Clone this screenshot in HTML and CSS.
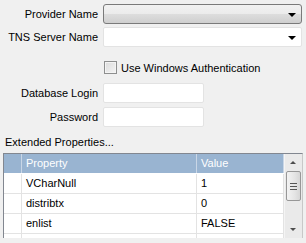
FILE: index.html
```html
<!DOCTYPE html>
<html lang="en">
<head>
    <meta charset="UTF-8">
    <title>Connection Properties</title>
    <link rel="stylesheet" href="styles.css">
</head>
<body>
    <div class="form">
        <div class="row">
            <span class="lbl">Provider Name</span>
            <div class="combo combo-ro"><span class="arrow"></span></div>
        </div>
        <div class="row row-tns">
            <span class="lbl">TNS Server Name</span>
            <div class="combo"><span class="arrow"></span></div>
        </div>
        <div class="check-row">
            <span class="checkbox"></span>
            <span class="check-text">Use Windows Authentication</span>
        </div>
        <div class="row row-login">
            <span class="lbl">Database Login</span>
            <div class="textbox"></div>
        </div>
        <div class="row row-pass">
            <span class="lbl">Password</span>
            <div class="textbox"></div>
        </div>
    </div>

    <div class="ext-title">Extended Properties...</div>

    <div class="grid">
        <div class="cells">
            <div class="cell head rowhead"></div>
            <div class="cell head">Property</div>
            <div class="cell head">Value</div>

            <div class="cell rowhead"></div>
            <div class="cell">VCharNull</div>
            <div class="cell">1</div>

            <div class="cell rowhead"></div>
            <div class="cell">distribtx</div>
            <div class="cell">0</div>

            <div class="cell rowhead"></div>
            <div class="cell">enlist</div>
            <div class="cell">FALSE</div>

            <div class="cell rowhead"></div>
            <div class="cell">Workaround Oracle Bug 914652</div>
            <div class="cell">TRUE</div>
        </div>
        <div class="vscroll">
            <span class="sb-up"></span>
            <div class="sb-thumb"><span></span><span></span><span></span></div>
            <span class="sb-down"></span>
        </div>
    </div>
</body>
</html>
```

FILE: styles.css
```css
body {
    margin: 0;
    padding: 0;
    background-color: #f0f0f0;
    color: #000;
    font-family: "Liberation Sans", Arial, sans-serif;
    font-size: 11px;
    width: 306px;
    height: 243px;
    overflow: hidden;
}
.form {
    padding-top: 4px;
}
.row {
    display: flex;
    align-items: center;
    height: 20px;
}
.row-tns {
    margin-top: 3px;
}
.row-login {
    margin-top: 9px;
}
.row-pass {
    margin-top: 4px;
}
.lbl {
    width: 98px;
    text-align: right;
    margin-right: 5px;
    white-space: nowrap;
}
.combo {
    position: relative;
    width: 199px;
    height: 20px;
    box-sizing: border-box;
    background-color: #fff;
    border: 1px solid #e3e3e3;
    border-radius: 2px;
}
.combo-ro {
    border: 1px solid #7a7a7a;
    border-radius: 3px;
    background: linear-gradient(#f2f2f2 0%, #ebebeb 50%, #dddddd 51%, #cfcfcf 100%);
}
.arrow {
    position: absolute;
    right: 5px;
    top: 8px;
    width: 0;
    height: 0;
    border-left: 4px solid transparent;
    border-right: 4px solid transparent;
    border-top: 4px solid #000;
}
.check-row {
    display: flex;
    align-items: center;
    margin-top: 14px;
    margin-left: 104px;
    height: 13px;
}
.checkbox {
    width: 13px;
    height: 13px;
    box-sizing: border-box;
    border: 1px solid #8e8f8f;
    background: linear-gradient(135deg, #dcdcdc, #f4f4f4);
    box-shadow: inset 0 0 0 1px #f4f4f4;
    margin-right: 4px;
}
.textbox {
    width: 101px;
    height: 20px;
    box-sizing: border-box;
    background-color: #fff;
    border: 1px solid #e3e3e3;
    border-radius: 2px;
}
.ext-title {
    margin: 8px 0 0 5px;
    height: 14px;
    line-height: 14px;
}
.grid {
    display: flex;
    margin: 4px 0 0 3px;
    width: 300px;
    height: 85px;
    box-sizing: border-box;
    border: 1px solid #828790;
    border-right-color: #c8c8c8;
    border-bottom: none;
    background-color: #fff;
    overflow: hidden;
}
.cells {
    flex: 1;
    display: grid;
    grid-template-columns: 18px 175px 1fr;
    grid-auto-rows: 20px;
    align-content: start;
}
.cell {
    box-sizing: border-box;
    border-right: 1px solid #e3e3e3;
    border-bottom: 1px solid #e3e3e3;
    padding-left: 4px;
    line-height: 19px;
    white-space: nowrap;
    overflow: hidden;
}
.cell.head {
    height: 19px;
    background-color: #99b4d1;
    color: #fff;
    border-right-color: #c9d6e6;
    border-bottom: none;
    line-height: 19px;
}
.rowhead {
    padding: 0;
}
.vscroll {
    position: relative;
    width: 17px;
    background-color: #eaeaea;
    border-left: 1px solid #f4f4f4;
}
.sb-up, .sb-down {
    position: absolute;
    left: 5px;
    width: 0;
    height: 0;
    border-left: 3px solid transparent;
    border-right: 3px solid transparent;
}
.sb-up {
    top: 7px;
    border-bottom: 3px solid #4d4d4d;
}
.sb-down {
    top: 74px;
    border-top: 3px solid #4d4d4d;
}
.sb-thumb {
    position: absolute;
    left: 1px;
    top: 17px;
    width: 15px;
    height: 30px;
    box-sizing: border-box;
    border: 1px solid #979797;
    border-radius: 2px;
    background: linear-gradient(90deg, #f3f3f3, #e4e4e4 60%, #d6d6d6);
    display: flex;
    flex-direction: column;
    align-items: center;
    justify-content: center;
    gap: 2px;
}
.sb-thumb span {
    width: 7px;
    height: 1px;
    background-color: #555;
}
```
